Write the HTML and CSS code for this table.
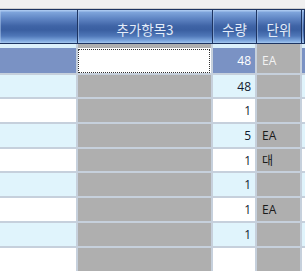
FILE: index.html
```html
<!DOCTYPE html>
<html lang="ko">
<head>
<meta charset="utf-8">
<link rel="stylesheet" href="styles.css">
</head>
<body>
<div class="topbar"></div>
<div class="grid">
  <div class="header">
    <div class="hc ca"></div>
    <div class="hc cb">추가항목3</div>
    <div class="hc cc">수량</div>
    <div class="hc cd">단위</div>
    <div class="hc ce"></div>
  </div>
  <div class="row strip">
    <div class="c ca"></div><div class="c cb g"></div><div class="c cc"></div><div class="c cd g"></div><div class="c ce"></div>
  </div>
  <div class="row sel">
    <div class="c ca"></div><div class="c cb focus"><span class="dots"></span></div><div class="c cc num">48</div><div class="c cd g txt">EA</div><div class="c ce"></div>
  </div>
  <div class="row alt">
    <div class="c ca"></div><div class="c cb g"></div><div class="c cc num">48</div><div class="c cd g txt"></div><div class="c ce"></div>
  </div>
  <div class="row">
    <div class="c ca"></div><div class="c cb g"></div><div class="c cc num">1</div><div class="c cd g txt"></div><div class="c ce"></div>
  </div>
  <div class="row alt">
    <div class="c ca"></div><div class="c cb g"></div><div class="c cc num">5</div><div class="c cd g txt">EA</div><div class="c ce"></div>
  </div>
  <div class="row">
    <div class="c ca"></div><div class="c cb g"></div><div class="c cc num">1</div><div class="c cd g txt">대</div><div class="c ce"></div>
  </div>
  <div class="row alt">
    <div class="c ca"></div><div class="c cb g"></div><div class="c cc num">1</div><div class="c cd g txt"></div><div class="c ce"></div>
  </div>
  <div class="row">
    <div class="c ca"></div><div class="c cb g"></div><div class="c cc num">1</div><div class="c cd g txt">EA</div><div class="c ce"></div>
  </div>
  <div class="row alt">
    <div class="c ca"></div><div class="c cb g"></div><div class="c cc num">1</div><div class="c cd g txt"></div><div class="c ce"></div>
  </div>
  <div class="row last">
    <div class="c ca"></div><div class="c cb g"></div><div class="c cc num"></div><div class="c cd g txt"></div><div class="c ce"></div>
  </div>
</div>
</body>
</html>
```
FILE: styles.css
```css
html, body {
  margin: 0;
  padding: 0;
  overflow: hidden;
  background: #f0f0f0;
  width: 305px;
  height: 271px;
}
.topbar {
  height: 8px;
  background: #f0f0f0;
  border-bottom: 1px solid #cfcfcf;
}
.grid {
  width: 100%;
  font-family: "Open Sans", "Noto Sans CJK KR", sans-serif;
}
.header {
  display: flex;
  height: 33px;
  border-top: 1px solid #1d3461;
  border-bottom: 1px solid #1d3461;
  background: linear-gradient(to bottom,
    #a9c7ef 0px, #a9c7ef 1px,
    #7fa5dc 2px, #6288c6 8px,
    #3f64a6 16px, #3a5fa1 20px,
    #4f77b8 26px, #7fa9e0 31px, #a6caf0 33px);
}
.hc {
  box-sizing: border-box;
  border-right: 1px solid #1d3461;
  box-shadow: inset 1px 0 0 rgba(180, 205, 240, 0.5);
  color: #e4edf9;
  font-family: "Noto Sans CJK KR", sans-serif;
  font-size: 13.5px;
  text-align: center;
  line-height: 33px;
  padding-top: 3px;
  height: 33px;
}
.ca { width: 78px; flex: none; }
.cb { width: 135px; flex: none; }
.cc { width: 44px; flex: none; }
.cd { width: 45px; flex: none; }
.ce { flex: 1; min-width: 0; }
.row {
  display: flex;
  height: 24.7px;
  box-sizing: border-box;
  border-bottom: 2px solid #c6d0dc;
  background: #ffffff;
}
.row.alt { background: #e0f4fc; }
.row.strip {
  height: 4px;
  border-bottom: 0;
  background: #dbf0fb;
}
.row.sel {
  height: 26.7px;
  background: #7a92c4;
}
.row.last { height: 30px; border-bottom: 0; }
.c {
  box-sizing: border-box;
  border-right: 2px solid #c6d0dc;
  height: 100%;
  font-size: 12px;
  color: #121a30;
  display: flex;
  align-items: center;
}
.c.g { background: #afafaf; }
.c.ce { border-right: 0; }
.num {
  justify-content: flex-end;
  padding-right: 4px;
}
.txt {
  padding-left: 5px;
  color: #1a1a1a;
}
.sel .num { color: #ffffff; }
.sel .txt { color: #f2f2f2; }
.c.focus {
  background: #ffffff;
  padding: 1px 1px 0 0;
}
.dots {
  display: block;
  width: 100%;
  height: 100%;
  box-sizing: border-box;
  border: 1px dotted #303030;
}
```
